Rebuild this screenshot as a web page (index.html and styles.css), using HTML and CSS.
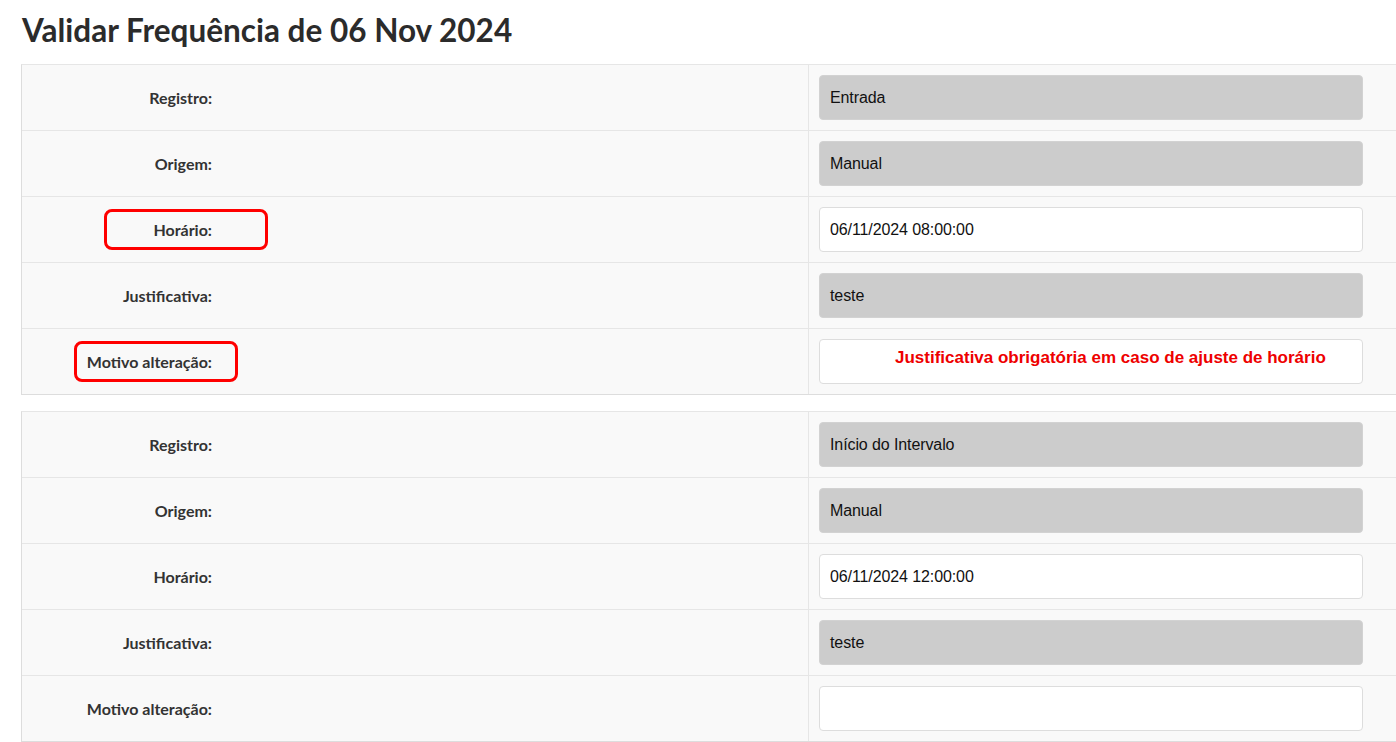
FILE: index.html
```html
<!DOCTYPE html>
<html lang="pt-BR">
<head>
<meta charset="utf-8">
<title>Validar Frequência</title>
<link rel="stylesheet" href="styles.css">
</head>
<body>
<h1 class="title">Validar Frequência de 06 Nov 2024</h1>

<div class="card">
  <div class="row">
    <div class="label-cell"><span class="label">Registro:</span></div>
    <div class="field-cell"><div class="input disabled">Entrada</div></div>
  </div>
  <div class="row">
    <div class="label-cell"><span class="label">Origem:</span></div>
    <div class="field-cell"><div class="input disabled">Manual</div></div>
  </div>
  <div class="row">
    <div class="label-cell"><span class="label">Horário:</span><span class="mark mark-horario"></span></div>
    <div class="field-cell"><div class="input">06/11/2024 08:00:00</div></div>
  </div>
  <div class="row">
    <div class="label-cell"><span class="label">Justificativa:</span></div>
    <div class="field-cell"><div class="input disabled">teste</div></div>
  </div>
  <div class="row">
    <div class="label-cell"><span class="label">Motivo alteração:</span><span class="mark mark-motivo"></span></div>
    <div class="field-cell"><div class="input textarea"><span class="warn">Justificativa obrigatória em caso de ajuste de horário</span></div></div>
  </div>
</div>

<div class="card">
  <div class="row">
    <div class="label-cell"><span class="label">Registro:</span></div>
    <div class="field-cell"><div class="input disabled">Início do Intervalo</div></div>
  </div>
  <div class="row">
    <div class="label-cell"><span class="label">Origem:</span></div>
    <div class="field-cell"><div class="input disabled">Manual</div></div>
  </div>
  <div class="row">
    <div class="label-cell"><span class="label">Horário:</span></div>
    <div class="field-cell"><div class="input">06/11/2024 12:00:00</div></div>
  </div>
  <div class="row">
    <div class="label-cell"><span class="label">Justificativa:</span></div>
    <div class="field-cell"><div class="input disabled">teste</div></div>
  </div>
  <div class="row">
    <div class="label-cell"><span class="label">Motivo alteração:</span></div>
    <div class="field-cell"><div class="input"></div></div>
  </div>
</div>
</body>
</html>
```

FILE: styles.css
```css
html, body {
  margin: 0;
  padding: 0;
  background: #ffffff;
  overflow: hidden;
}

body {
  font-family: "Lato", "Open Sans", sans-serif;
  color: #333333;
}

.title {
  margin: 0;
  padding: 12px 0 0 22px;
  height: 64px;
  box-sizing: border-box;
  font-family: "Lato", sans-serif;
  font-weight: 700;
  font-size: 31.5px;
  line-height: 36px;
  color: #2b2b2b;
}

.card {
  margin-left: 21px;
  width: 1390px;
  border-left: 1px solid #dddddd;
  border-top: 1px solid #e6e6e6;
  border-bottom: 1px solid #dddddd;
  background: #f9f9f9;
  margin-bottom: 16px;
}

.row {
  display: grid;
  grid-template-columns: 787px 1fr;
  height: 65px;
  border-top: 1px solid #e6e6e6;
}

.row:first-child {
  border-top: none;
}

.label-cell {
  position: relative;
  display: flex;
  align-items: center;
  border-right: 1px solid #e6e6e6;
}

.label {
  width: 190px;
  text-align: right;
  font-family: "Lato", sans-serif;
  font-weight: 700;
  font-size: 16px;
  color: #333333;
}

.mark {
  position: absolute;
  top: 12px;
  width: 158px;
  height: 35px;
  border: 3px solid #ff0000;
  border-radius: 8px;
}

.mark-horario {
  left: 82px;
}

.mark-motivo {
  left: 52px;
}

.field-cell {
  display: flex;
  align-items: center;
  padding-left: 10px;
}

.input {
  box-sizing: border-box;
  width: 544px;
  height: 45px;
  border: 1px solid #dddddd;
  border-radius: 4px;
  background: #ffffff;
  padding: 0 10px;
  display: flex;
  align-items: center;
  font-family: "Liberation Sans", Arial, sans-serif;
  font-size: 16px;
  letter-spacing: -0.1px;
  color: #111111;
}

.input.disabled {
  background: #cccccc;
  border-color: #d2d2d2;
}

.input.textarea {
  align-items: flex-start;
  padding-top: 8px;
  padding-left: 75px;
}

.warn {
  font-weight: 700;
  font-size: 17px;
  color: #ee0000;
  letter-spacing: 0;
}
```
